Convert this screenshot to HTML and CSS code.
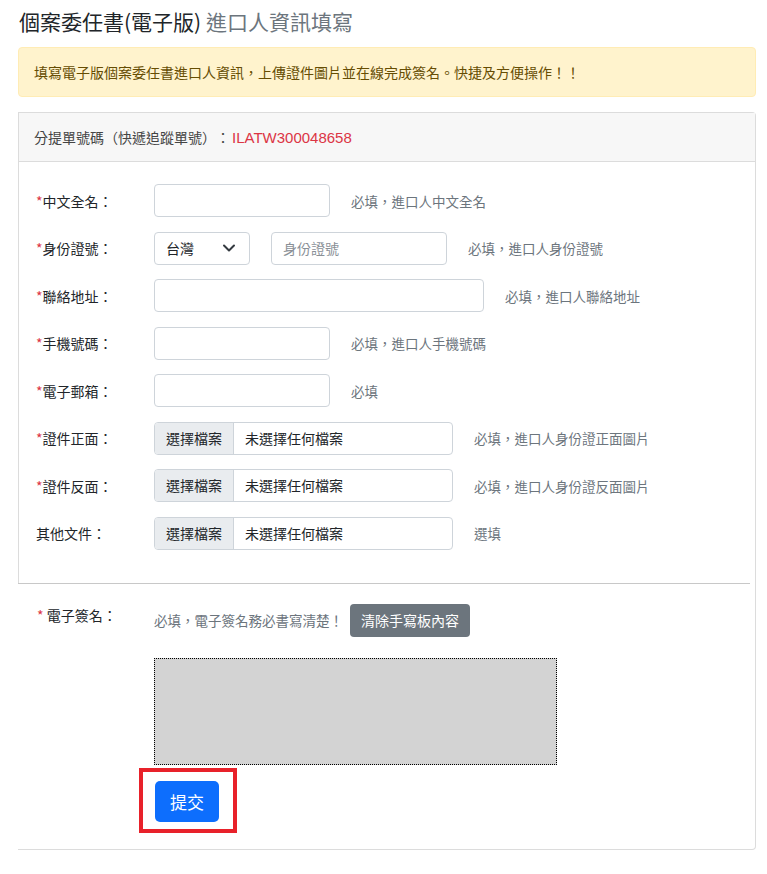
FILE: index.html
```html
<!DOCTYPE html>
<html lang="zh-Hant">
<head>
<meta charset="utf-8">
<title>個案委任書(電子版)</title>
<link rel="stylesheet" href="styles.css">
</head>
<body>
<div class="container">
  <h3 class="title">個案委任書(電子版) <small class="muted">進口人資訊填寫</small></h3>
  <div class="alert">填寫電子版個案委任書進口人資訊，上傳證件圖片並在線完成簽名。快捷及方便操作！！</div>
  <div class="card">
    <div class="card-header">分提單號碼（快遞追蹤單號）：<span class="code">ILATW300048658</span></div>
    <div class="card-body">
      <div class="row">
        <label class="label"><span class="req">*</span>中文全名：</label>
        <div class="input w176"></div>
        <span class="help">必填，進口人中文全名</span>
      </div>
      <div class="row">
        <label class="label"><span class="req">*</span>身份證號：</label>
        <div class="select">台灣<svg class="chev" width="16" height="12" viewBox="0 0 16 12"><path d="M3 3.5l5 5 5-5" fill="none" stroke="#343a40" stroke-width="2" stroke-linecap="round" stroke-linejoin="round"/></svg></div>
        <div class="input w176 ph">身份證號</div>
        <span class="help">必填，進口人身份證號</span>
      </div>
      <div class="row">
        <label class="label"><span class="req">*</span>聯絡地址：</label>
        <div class="input w330"></div>
        <span class="help">必填，進口人聯絡地址</span>
      </div>
      <div class="row">
        <label class="label"><span class="req">*</span>手機號碼：</label>
        <div class="input w176"></div>
        <span class="help">必填，進口人手機號碼</span>
      </div>
      <div class="row">
        <label class="label"><span class="req">*</span>電子郵箱：</label>
        <div class="input w176"></div>
        <span class="help">必填</span>
      </div>
      <div class="row">
        <label class="label"><span class="req">*</span>證件正面：</label>
        <div class="file"><span class="file-btn">選擇檔案</span><span class="file-name">未選擇任何檔案</span></div>
        <span class="help">必填，進口人身份證正面圖片</span>
      </div>
      <div class="row">
        <label class="label"><span class="req">*</span>證件反面：</label>
        <div class="file"><span class="file-btn">選擇檔案</span><span class="file-name">未選擇任何檔案</span></div>
        <span class="help">必填，進口人身份證反面圖片</span>
      </div>
      <div class="row">
        <label class="label">其他文件：</label>
        <div class="file"><span class="file-btn">選擇檔案</span><span class="file-name">未選擇任何檔案</span></div>
        <span class="help">選填</span>
      </div>
    </div>
    <hr class="divider">
    <div class="sig">
      <div class="sig-row">
        <label class="sig-label"><span class="req">*</span> 電子簽名：</label>
        <div class="sig-main">
          <div class="sig-top">
            <span class="help-s">必填，電子簽名務必書寫清楚！</span>
            <span class="btn-gray">清除手寫板內容</span>
          </div>
          <div class="pad"></div>
        </div>
      </div>
      <div class="submit-wrap">
        <span class="btn-blue">提交</span>
      </div>
    </div>
  </div>
</div>
</body>
</html>
```

FILE: styles.css
```css
* { box-sizing: border-box; }
html, body { margin: 0; padding: 0; background: #fff; }
body {
  font-family: "Noto Sans CJK TC", "Noto Sans", "Liberation Sans", sans-serif;
  color: #212529;
  font-size: 14px;
  text-spacing-trim: space-all;
}
.container {
  width: 738px;
  margin-left: 18px;
}
.title {
  margin: 6px 0 0 1px;
  font-size: 21px;
  line-height: 30px;
  font-weight: 400;
  color: #212529;
}
.muted { font-size: 21px; color: #6c757d; }
.alert {
  margin-top: 11px;
  background: #fff3cd;
  border: 1px solid #ffecb5;
  border-radius: 4px;
  color: #664d03;
  padding: 14px 15px;
  line-height: 20px;
  font-size: 14px;
}
.card {
  margin-top: 15px;
  border-top: 1px solid #dcdcdc;
  border-right: 1px solid #dcdcdc;
  border-bottom: 1px solid #dcdcdc;
  border-radius: 0 4px 4px 0;
}
.card-header {
  background: #f7f7f7;
  border-left: 1px solid #dcdcdc;
  border-bottom: 1px solid #dcdcdc;
  padding: 14px 15px 13px;
  line-height: 21px;
  color: #444;
}
.code {
  color: #dc3545;
  font-family: "Liberation Sans", sans-serif;
  font-size: 15px;
  margin-left: 2px;
}
.card-body {
  border-left: 1px solid #dcdcdc;
  padding: 22px 17px 33px;
  display: flex;
  flex-direction: column;
  gap: 14.5px;
}
.row {
  display: flex;
  align-items: center;
  height: 33px;
}
.label {
  width: 118px;
  flex: none;
  color: #212529;
}
.req { color: #dc3545; }
.input {
  height: 33px;
  border: 1px solid #ced4da;
  border-radius: 4px;
  background: #fff;
  flex: none;
  padding: 0 11px;
  line-height: 31px;
}
.ph { color: #8a9097; }
.w176 { width: 176px; }
.w330 { width: 330px; }
.select {
  width: 96px;
  height: 33px;
  border: 1px solid #ced4da;
  border-radius: 4px;
  flex: none;
  display: flex;
  align-items: center;
  justify-content: space-between;
  padding: 0 12px 0 11px;
  margin-right: 21px;
}
.help {
  margin-left: 21px;
  color: #6c757d;
  font-size: 13.5px;
}
.file {
  width: 299px;
  height: 33px;
  border: 1px solid #ced4da;
  border-radius: 4px;
  display: flex;
  flex: none;
  overflow: hidden;
}
.file-btn {
  background: #e9ecef;
  border-right: 1px solid #ced4da;
  padding: 0 11px;
  line-height: 31px;
  color: #212529;
}
.file-name {
  padding: 0 11px;
  line-height: 31px;
  color: #212529;
}
.divider {
  margin: 0;
  border: 0;
  border-top: 1px solid #c8c8c8;
  width: 732px;
}
.sig {
  padding: 20px 0 16px 0;
}
.sig-row {
  display: flex;
}
.sig-label {
  width: 136px;
  padding-left: 19px;
  flex: none;
  line-height: 20px;
  padding-top: 1px;
}
.sig-main {
  display: flex;
  flex-direction: column;
}
.sig-top {
  display: flex;
  align-items: center;
  gap: 7px;
}
.help-s {
  color: #6c757d;
  font-size: 13.5px;
}
.btn-gray {
  background: #6c757d;
  color: #fff;
  border-radius: 4px;
  height: 33px;
  line-height: 33px;
  padding: 0 11px;
}
.pad {
  margin-top: 21px;
  width: 403px;
  height: 107px;
  background: #d3d3d3;
  border: 1px dotted #000;
}
.submit-wrap {
  margin: 3px 0 0 121px;
  width: 98px;
  height: 65px;
  border: 4px solid #e8212a;
  padding: 9px 0 0 12px;
}
.btn-blue {
  display: inline-block;
  background: #0d6efd;
  color: #fff;
  border-radius: 5px;
  width: 64px;
  height: 41px;
  line-height: 41px;
  text-align: center;
  font-size: 17px;
}
```
